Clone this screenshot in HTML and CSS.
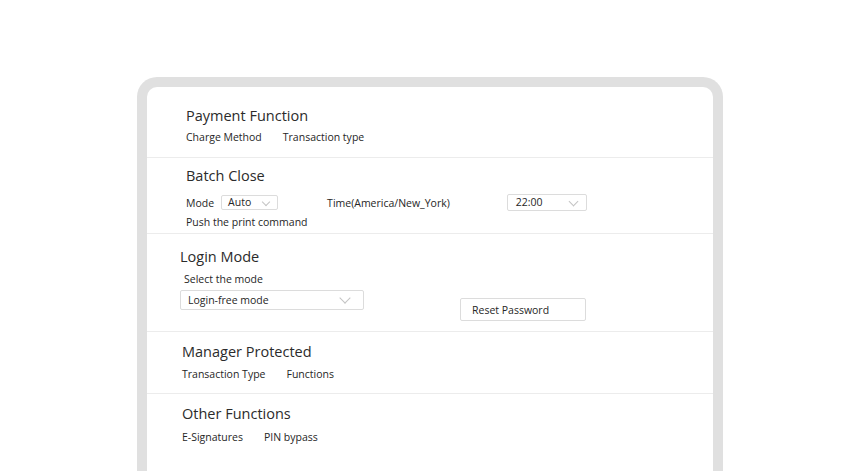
FILE: index.html
```html
<!DOCTYPE html>
<html lang="en">
<head>
  <meta charset="UTF-8">
  <title>Settings</title>
  <link rel="stylesheet" href="styles.css">
</head>
<body>
  <div class="device">
    <div class="screen">
      <!-- Payment -->
      <section class="block block-payment">
        <h2>Payment Function</h2>
        <div class="links">
          <span>Charge Method</span>
          <span>Transaction type</span>
        </div>
      </section>

      <!-- Batch close -->
      <section class="block block-batch">
        <h2>Batch Close</h2>
        <div class="batch-row">
          <span>Mode</span>
          <div class="select select-mode">Auto<span class="chev"></span></div>
          <span class="time-label">Time(America/New_York)</span>
          <div class="select select-time">22:00<span class="chev"></span></div>
        </div>
        <div class="push">Push the print command</div>
      </section>

      <!-- Login -->
      <section class="block block-login">
        <h2>Login Mode</h2>
        <div class="login-label">Select the mode</div>
        <div class="login-row">
          <div class="select select-login">Login-free mode<span class="chev"></span></div>
          <button class="reset">Reset Password</button>
        </div>
      </section>

      <section class="block block-manager">
        <h2>Manager Protected</h2>
        <div class="links">
          <span>Transaction Type</span>
          <span>Functions</span>
        </div>
      </section>

      <section class="block block-other">
        <h2>Other Functions</h2>
        <div class="links">
          <span>E-Signatures</span>
          <span>PIN bypass</span>
        </div>
      </section>
    </div>
  </div>
</body>
</html>
```

FILE: styles.css
```css
/* Page */
body {
  margin: 0;
  background: #ffffff;
  font-family: 'Open Sans', 'Noto Sans', sans-serif;
  color: #262626;
  height: 471px;
  overflow: hidden;
}
/* Tablet frame */
.device {
  margin: 77px 0 0 137px;
  width: 566px;
  height: 400px;
  border: 10px solid #e0e0e0;
  border-bottom: none;
  border-radius: 20px 20px 0 0;
}
.screen {
  display: flex;
  flex-direction: column;
}
/* Sections */
.block {
  border-bottom: 1px solid #ececec;
}
.block h2 {
  margin: 0;
  font-size: 14.5px;
  font-weight: 500;
  line-height: 20px;
  color: #2b2b2b;
}
.links {
  display: flex;
  gap: 21px;
  font-size: 10.5px;
  font-weight: 500;
  line-height: 16px;
}
.block-payment {
  padding: 19px 0 12px 39px;
}
.block-payment .links {
  margin-top: 3px;
}
.block-batch {
  padding: 8px 0 3px 39px;
}
.batch-row {
  display: flex;
  align-items: center;
  font-size: 10.5px;
  font-weight: 500;
  margin-top: 8px;
}
.select {
  position: relative;
  box-sizing: border-box;
  border: 1px solid #dcdcdc;
  border-radius: 2px;
  font-size: 10.5px;
  font-weight: 500;
  color: #262626;
  background: #fff;
}
.chev {
  position: absolute;
  top: 50%;
  width: 6px;
  height: 6px;
  margin-top: -5px;
  border-right: 1px solid #c4c4c4;
  border-bottom: 1px solid #c4c4c4;
  transform: rotate(45deg);
}
.select-mode {
  width: 57px;
  height: 15px;
  line-height: 13px;
  padding-left: 6px;
  margin-left: 7px;
}
.select-mode .chev { right: 8px; width: 5px; height: 5px; margin-top: -4px; }
.time-label {
  margin-left: 49px;
}
.select-time {
  width: 80px;
  height: 17px;
  line-height: 15px;
  padding-left: 8px;
  margin-left: 57px;
}
.select-time .chev { right: 9px; }
.push {
  font-size: 10.5px;
  font-weight: 500;
  line-height: 16px;
  margin-top: 3px;
}
.block-login {
  padding: 13px 0 10px 33px;
}
.login-label {
  font-size: 10.5px;
  font-weight: 500;
  line-height: 16px;
  margin: 4px 0 0 4px;
}
.login-row {
  display: flex;
  align-items: flex-start;
  margin-top: 3px;
}
.select-login {
  width: 184px;
  height: 20px;
  line-height: 18px;
  padding-left: 7px;
}
.select-login .chev { right: 14px; width: 7px; height: 7px; margin-top: -6px; }
.reset {
  margin: 8px 0 0 96px;
  width: 126px;
  height: 23px;
  box-sizing: border-box;
  border: 1px solid #dcdcdc;
  border-radius: 2px;
  background: #fff;
  font-family: inherit;
  font-size: 10.5px;
  font-weight: 500;
  color: #262626;
  text-align: left;
  padding: 0 0 0 11px;
}
.block-manager {
  padding: 10px 0 11px 35px;
}
.block-manager .links { margin-top: 4px; }
.block-other {
  border-bottom: none;
  padding: 10px 0 0 35px;
}
.block-other .links { margin-top: 5px; }
```
